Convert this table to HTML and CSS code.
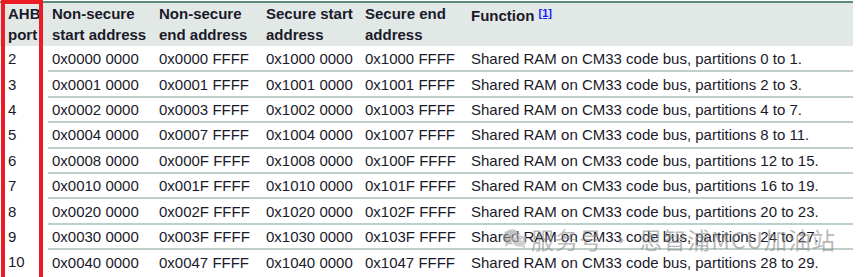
FILE: index.html
```html
<!DOCTYPE html>
<html>
<head>
<meta charset="utf-8">
<link rel="stylesheet" href="styles.css">
</head>
<body>
<div class="wrap">
<table class="map">
  <colgroup>
    <col class="c1"><col class="c2"><col class="c3"><col class="c4"><col class="c5"><col class="c6">
  </colgroup>
  <thead>
    <tr>
      <th>AHB port</th>
      <th>Non-secure start address</th>
      <th>Non-secure end address</th>
      <th>Secure&nbsp;start address</th>
      <th>Secure end address</th>
      <th>Function <a class="fn" href="#">[1]</a></th>
    </tr>
  </thead>
  <tbody>
    <tr><td>2</td><td>0x0000 0000</td><td>0x0000 FFFF</td><td>0x1000 0000</td><td>0x1000 FFFF</td><td>Shared RAM on CM33 code bus, partitions 0 to 1.</td></tr>
    <tr><td>3</td><td>0x0001 0000</td><td>0x0001 FFFF</td><td>0x1001 0000</td><td>0x1001 FFFF</td><td>Shared RAM on CM33 code bus, partitions 2 to 3.</td></tr>
    <tr><td>4</td><td>0x0002 0000</td><td>0x0003 FFFF</td><td>0x1002 0000</td><td>0x1003 FFFF</td><td>Shared RAM on CM33 code bus, partitions 4 to 7.</td></tr>
    <tr><td>5</td><td>0x0004 0000</td><td>0x0007 FFFF</td><td>0x1004 0000</td><td>0x1007 FFFF</td><td>Shared RAM on CM33 code bus, partitions 8 to 11.</td></tr>
    <tr><td>6</td><td>0x0008 0000</td><td>0x000F FFFF</td><td>0x1008 0000</td><td>0x100F FFFF</td><td>Shared RAM on CM33 code bus, partitions 12 to 15.</td></tr>
    <tr><td>7</td><td>0x0010 0000</td><td>0x001F FFFF</td><td>0x1010 0000</td><td>0x101F FFFF</td><td>Shared RAM on CM33 code bus, partitions 16 to 19.</td></tr>
    <tr><td>8</td><td>0x0020 0000</td><td>0x002F FFFF</td><td>0x1020 0000</td><td>0x102F FFFF</td><td>Shared RAM on CM33 code bus, partitions 20 to 23.</td></tr>
    <tr><td>9</td><td>0x0030 0000</td><td>0x003F FFFF</td><td>0x1030 0000</td><td>0x103F FFFF</td><td>Shared RAM on CM33 code bus, partitions 24 to 27.</td></tr>
    <tr><td>10</td><td>0x0040 0000</td><td>0x0047 FFFF</td><td>0x1040 0000</td><td>0x1047 FFFF</td><td>Shared RAM on CM33 code bus, partitions 28 to 29.</td></tr>
  </tbody>
</table>
<div class="redbox"></div>
<div class="watermark">
  <svg class="wx" width="24" height="20" viewBox="0 0 24 20">
    <ellipse cx="9" cy="8" rx="9" ry="7.5" fill="#9a9a9a"/>
    <path d="M3 13 L2 18 L7 14 Z" fill="#9a9a9a"/>
    <ellipse cx="16.5" cy="12" rx="7.5" ry="6.2" fill="#b0b0b0" stroke="#fff" stroke-width="1"/>
    <path d="M21 16 L22.5 19.5 L18 17.5 Z" fill="#b0b0b0"/>
    <circle cx="6" cy="6.5" r="1.2" fill="#fff"/>
    <circle cx="12" cy="6.5" r="1.2" fill="#fff"/>
    <circle cx="14" cy="11" r="1" fill="#fff"/>
    <circle cx="19" cy="11" r="1" fill="#fff"/>
  </svg>
  <span class="wt">服务号 · 恩智浦MCU加油站</span>
</div>
</div>
</body>
</html>
```

FILE: styles.css
```css
html, body {
  margin: 0;
  padding: 0;
  background: #ffffff;
}
.wrap {
  position: relative;
  width: 865px;
  height: 277px;
  overflow: hidden;
  padding-top: 1px;
  box-sizing: border-box;
}
.map {
  border-collapse: collapse;
  table-layout: fixed;
  width: 853px;
  font-family: "Liberation Sans", Arial, sans-serif;
  font-size: 15px;
  color: #1a1a2a;
  border-top: 2px solid #5b8c7f;
}
.c1 { width: 48px; }
.c2 { width: 107px; }
.c3 { width: 107px; }
.c4 { width: 99px; }
.c5 { width: 106px; }
.c6 { width: 386px; }
.map thead tr {
  height: 43px;
  background: #e2e8e6;
}
.map th {
  font-weight: bold;
  text-align: left;
  vertical-align: top;
  line-height: 21px;
  padding: 0 0 1px 4px;
}
.map th:first-child,
.map td:first-child {
  padding-left: 8px;
}
.map tbody tr {
  height: 25.4px;
}
.map td {
  padding: 0 0 0 4px;
  line-height: 17px;
  white-space: nowrap;
  vertical-align: middle;
}
.map tbody tr:not(:last-child) td:not(:first-child) {
  border-bottom: 2px solid #bccfcc;
}
.fn {
  color: #1a1aff;
  font-size: 11px;
  vertical-align: 4px;
  text-decoration: underline;
}
.redbox {
  position: absolute;
  left: 1px;
  top: 0;
  width: 42px;
  height: 290px;
  box-sizing: border-box;
  border: 4px solid #ec1c24;
  border-bottom: none;
}
.watermark {
  position: absolute;
  left: 503px;
  top: 226px;
  display: flex;
  align-items: center;
  gap: 4px;
  opacity: 0.6;
  pointer-events: none;
}
.wt {
  font-family: "Noto Sans CJK SC", "Noto Sans", sans-serif;
  font-size: 23px;
  line-height: 26px;
  color: #8c8c8c;
  letter-spacing: 1px;
}
```
